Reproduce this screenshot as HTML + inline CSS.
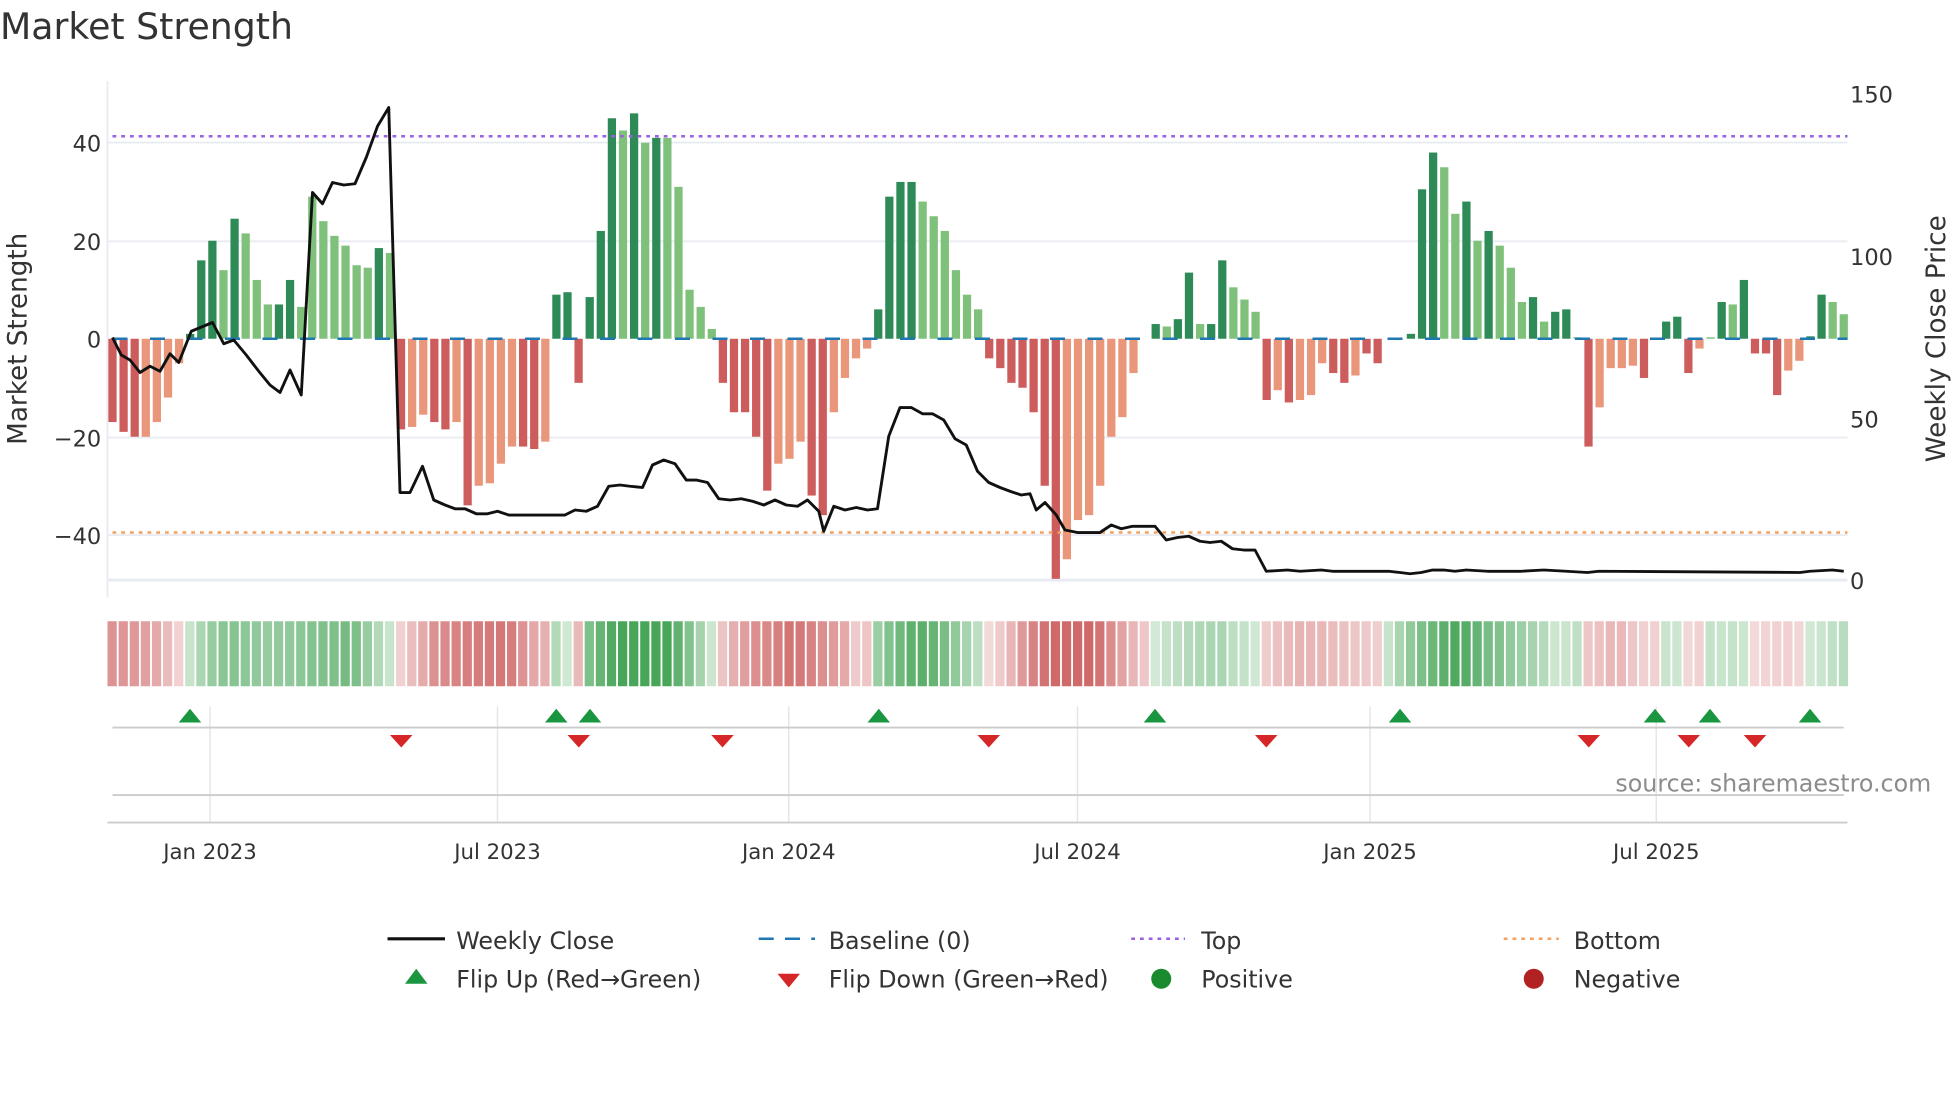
<!DOCTYPE html>
<html><head><meta charset="utf-8"><style>
html,body{margin:0;padding:0;background:#fff;width:1960px;height:1102px;overflow:hidden}
svg{display:block}
text{font-family:"DejaVu Sans","Liberation Sans",sans-serif;fill:#333}
</style></head><body>
<svg id="s" width="1960" height="1102" viewBox="0 0 1568 881.6" xmlns="http://www.w3.org/2000/svg">
<rect width="1568" height="882" fill="#fff"/>
<text x="0" y="31" font-size="29">Market Strength</text>
<g id="grid" stroke="#e9ecf2" stroke-width="1.5">
<line x1="86" x2="1478" y1="114" y2="114"/><line x1="86" x2="1478" y1="193" y2="193"/>
<line x1="86" x2="1478" y1="350" y2="350"/><line x1="86" x2="1478" y1="428" y2="428"/>
<line x1="86" x2="1478" y1="464" y2="464" stroke-width="2.5"/>
<line x1="86" x2="86" y1="65" y2="478"/>
</g>
<g id="bars"></g>
<line x1="90" x2="1478" y1="271" y2="271" stroke="#1f77b4" stroke-width="2" stroke-dasharray="12,18"/>
<line x1="90" x2="1478" y1="109" y2="109" stroke="#9b5fe0" stroke-width="2" stroke-dasharray="3,4"/>
<line x1="90" x2="1478" y1="426" y2="426" stroke="#f4a15d" stroke-width="2" stroke-dasharray="3,4"/>
<polyline id="pl" fill="none" stroke="#111" stroke-width="2.3" stroke-linejoin="round"/>
<g font-size="18">
<text x="81" y="121" text-anchor="end">40</text><text x="81" y="200" text-anchor="end">20</text>
<text x="81" y="278" text-anchor="end">0</text><text x="81" y="357" text-anchor="end">−20</text>
<text x="81" y="435" text-anchor="end">−40</text>
<text x="1480" y="82">150</text><text x="1480" y="212">100</text><text x="1480" y="342">50</text><text x="1480" y="471">0</text>
</g>
<text transform="translate(21,271) rotate(-90)" font-size="21" text-anchor="middle">Market Strength</text>
<text transform="translate(1556,271) rotate(-90)" font-size="21" text-anchor="middle">Weekly Close Price</text>
<g id="heat"></g>
<g stroke="#e6e6e6" stroke-width="1.2">
<line x1="168" x2="168" y1="565" y2="658"/><line x1="398" x2="398" y1="565" y2="658"/>
<line x1="631" x2="631" y1="565" y2="658"/><line x1="862" x2="862" y1="565" y2="658"/>
<line x1="1096" x2="1096" y1="565" y2="658"/><line x1="1325" x2="1325" y1="565" y2="658"/>
</g>
<line x1="90" x2="1475" y1="582" y2="582" stroke="#ccc" stroke-width="1.5"/>
<line x1="90" x2="1475" y1="636" y2="636" stroke="#ccc" stroke-width="1.5"/>
<line x1="86" x2="1478" y1="658" y2="658" stroke="#ccc" stroke-width="1.5"/>
<g id="tri"></g>
<text x="1545" y="633" font-size="19" text-anchor="end" style="fill:#8c8c8c">source: sharemaestro.com</text>
<g font-size="17" text-anchor="middle">
<text x="168" y="687">Jan 2023</text><text x="398" y="687">Jul 2023</text><text x="631" y="687">Jan 2024</text>
<text x="862" y="687">Jul 2024</text><text x="1096" y="687">Jan 2025</text><text x="1325" y="687">Jul 2025</text>
</g>
<g font-size="19">
<line x1="310" x2="356" y1="751" y2="751" stroke="#111" stroke-width="2.5"/><text x="365" y="759">Weekly Close</text>
<line x1="607" x2="652" y1="751" y2="751" stroke="#1f77b4" stroke-width="2" stroke-dasharray="12,9"/><text x="663" y="759">Baseline (0)</text>
<line x1="905" x2="948" y1="751" y2="751" stroke="#9b5fe0" stroke-width="2" stroke-dasharray="3,4"/><text x="961" y="759">Top</text>
<line x1="1203" x2="1247" y1="751" y2="751" stroke="#f4a15d" stroke-width="2" stroke-dasharray="3,4"/><text x="1259" y="759">Bottom</text>
<polygon points="324,787 342,787 333,775" fill="#1a9641"/><text x="365" y="790">Flip Up (Red→Green)</text>
<polygon points="622,779 640,779 631,790" fill="#d62728"/><text x="663" y="790">Flip Down (Green→Red)</text>
<circle cx="929" cy="783" r="8" fill="#1a8a2e"/><text x="961" y="790">Positive</text>
<circle cx="1227" cy="783" r="8" fill="#b22222"/><text x="1259" y="790">Negative</text>
</g>
</svg>
<script>
var NS="http://www.w3.org/2000/svg";
function el(t,a,p){var e=document.createElementNS(NS,t);for(var k in a)e.setAttribute(k,a[k]);p.appendChild(e);return e;}
var D=[[-17,1],[-19,1],[-20,1],[-20,0],[-17,0],[-12,0],[-5,0],[1,1],[16,1],[20,1],[14,0],[24.5,1],[21.5,0],[12,0],[7,0],[7,1],[12,1],[6.5,0],[29,0],[24,0],[21,0],[19,0],[15,0],[14.5,0],[18.5,1],[17.5,0],
[-18.5,1],[-18,0],[-15.5,0],[-17,1],[-18.5,1],[-17,0],[-34,1],[-30,0],[-29.5,0],[-25.5,0],[-22,0],[-22,1],[-22.5,1],[-21,0],
[9,1],[9.5,1],[-9,1],[8.5,1],[22,1],[45,1],[42.5,0],[46,1],[40,0],[41,1],[41,0],[31,0],[10,0],[6.5,0],[2,0],[-9,1],[-15,1],[-15,1],[-20,1],[-31,1],[-25.5,0],[-24.5,0],
[-21,0],[-32,1],[-36,1],[-15,0],[-8,0],[-4,0],[-2,0],[6,1],[29,1],[32,1],[32,1],[28,0],[25,0],[22,0],[14,0],[9,0],[6,0],
[-4,1],[-6,1],[-9,1],[-10,1],[-15,1],[-30,1],[-49,1],[-45,0],[-37,0],[-36,0],[-30,0],[-20,0],[-16,0],[-7,0],
[0,0],[3,1],[2.5,0],[4,1],[13.5,1],[3,0],[3,1],[16,1],[10.5,0],[8,0],[5.5,0],
[-12.5,1],[-10.5,0],[-13,1],[-12.5,0],[-11.5,0],[-5,0],[-7,1],[-9,1],[-7.5,0],[-3,1],[-5,1],
[0,0],[0,0],[1,1],[30.5,1],[38,1],[35,0],[25.5,0],[28,1],[20,0],[22,1],[19,0],[14.5,0],[7.5,0],[8.5,1],[3.5,0],[5.5,1],[6,1],[0.3,0],
[-22,1],[-14,0],[-6,0],[-6,0],[-5.5,0],[-8,1],[0,0],
[3.5,1],[4.5,1],[-7,1],[-2,0],[0.3,0],[7.5,1],[7,0],[12,1],[-3,1],[-3,1],[-11.5,1],[-6.5,0],[-4.5,0],[0.5,1],[9,1],[7.5,0],[5,0]];
var n=D.length, sp=(1475-90)/(n-1), bars=document.getElementById('bars'), heat=document.getElementById('heat');
for(var i=0;i<n;i++){var v=D[i][0],d=D[i][1],x=90+i*sp;var y0=271,y1=271-v*3.92;
 var c=v>=0?(d?'#2e8b57':'#7fc17b'):(d?'#cd5c5c':'#e9967a');
 if(Math.abs(v)>0.05) el('rect',{x:x-3.3,y:Math.min(y0,y1),width:6.6,height:Math.abs(y1-y0),fill:c},bars);
 var s=0,k=0;for(var j=Math.max(0,i-3);j<=Math.min(n-1,i+3);j++){s+=D[j][0];k++;} s/=k;
 var pos=v>0||(v==0&&s>=0); var a=Math.min(1,0.25+Math.abs(s)/40);
 var hc=pos?'rgba(40,150,60,'+(a*0.85)+')':'rgba(200,80,80,'+(a*0.85)+')';
 el('rect',{x:x-4,y:497,width:7.4,height:52,fill:hc},heat);}
var P=[90,270,97,284,104,288,112,298,120,293,128,297,136,283,143,290,153,265,170,258,179,275,187,272,197,284,207,297,216,308,224,314,232,296,241,316,250,154,258,163,266,146,275,148,284,147,293,126,302,101,311,86,320,394,328,394,338,373,347,400,356,404,364,407,372,407,381,411,390,411,398,409,407,412,415,412,425,412,434,412,443,412,452,412,460,408,469,409,478,405,487,389,496,388,504,389,514,390,522,372,531,368,540,371,549,384,557,384,566,386,575,399,584,400,593,399,602,401,611,404,620,400,629,404,638,405,646,400,655,409,659,425,667,405,676,408,685,406,694,408,702,407,711,349,720,326,729,326,738,331,746,331,755,336,764,351,773,356,782,377,791,386,800,390,808,393,817,396,824,395,829,408,836,402,845,412,852,424,862,426,871,426,880,426,889,420,897,423,906,421,915,421,924,421,933,432,942,430,951,429,960,433,968,434,977,433,986,439,995,440,1004,440,1013,457,1030,456,1040,457,1057,456,1066,457,1084,457,1093,457,1111,457,1120,458,1128,459,1137,458,1146,456,1155,456,1164,457,1173,456,1190,457,1217,457,1235,456,1253,457,1270,458,1279,457,1440,458,1448,457,1466,456,1475,457];
var pts=[];for(var i=0;i<P.length;i+=2)pts.push(P[i]+','+P[i+1]);document.getElementById('pl').setAttribute('points',pts.join(' '));
var tri=document.getElementById('tri');
[152,445,472,703,924,1120,1324,1368,1448].forEach(function(x){el('polygon',{points:(x-9)+',578 '+(x+9)+',578 '+x+',567',fill:'#1a9641'},tri);});
[321,463,578,791,1013,1271,1351,1404].forEach(function(x){el('polygon',{points:(x-9)+',588 '+(x+9)+',588 '+x+',598',fill:'#d62728'},tri);});
</script>
</body></html>
